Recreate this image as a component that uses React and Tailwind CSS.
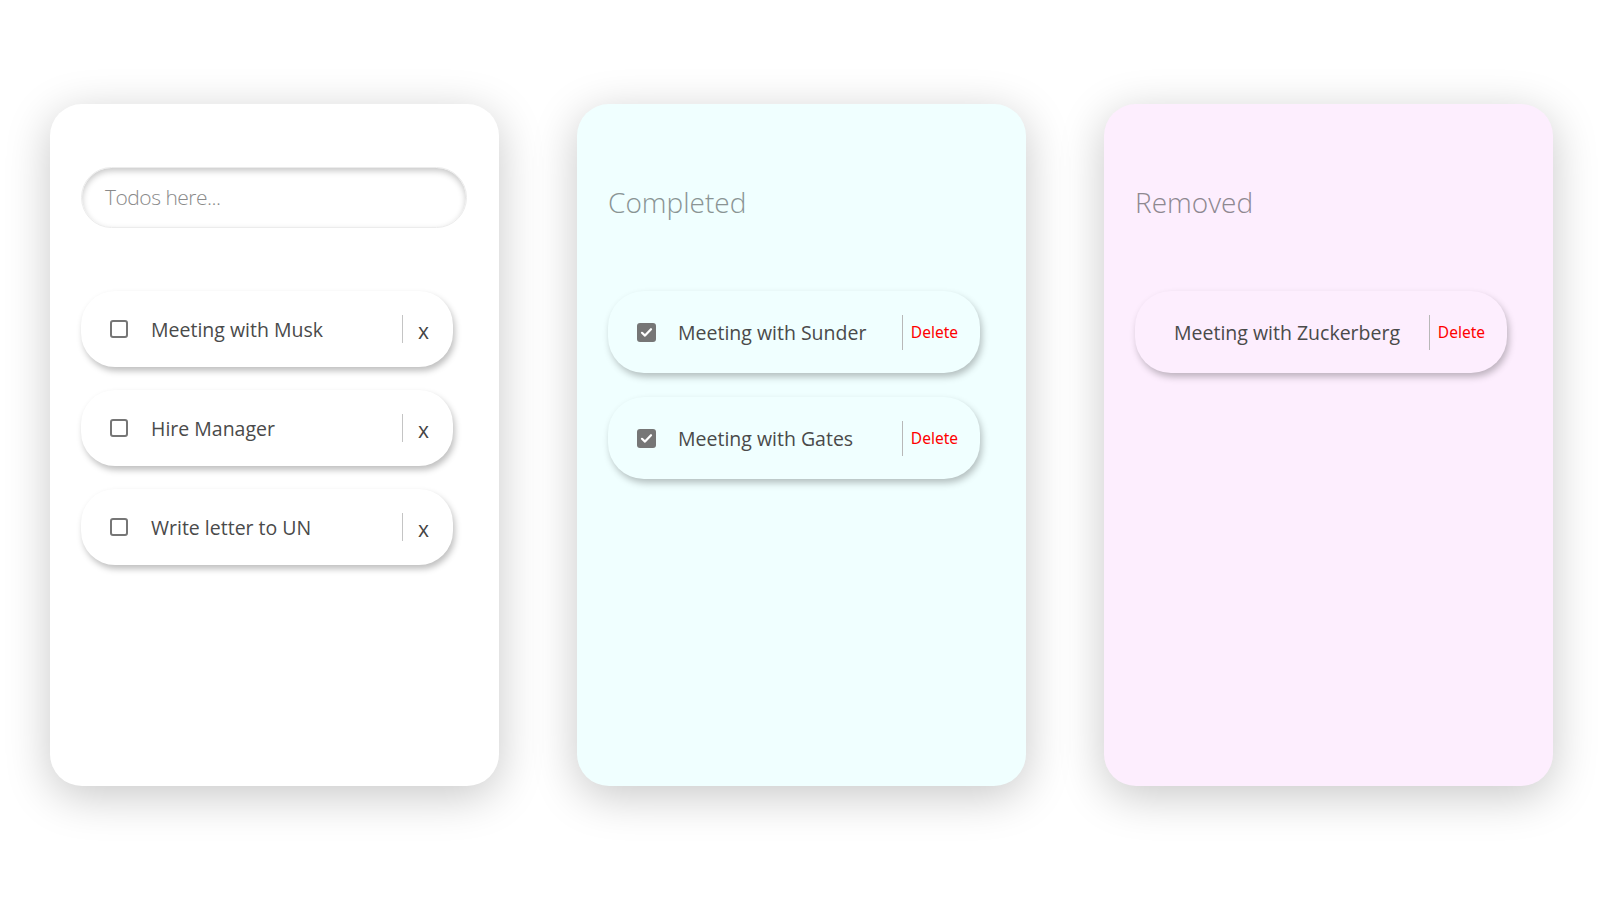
import React from "react";

const font = { fontFamily: '"Open Sans", "Noto Sans", sans-serif' };

function Unchecked() {
  return <span className="block w-[18px] h-[18px] rounded-[3px] border-2 border-[#767676] bg-white shrink-0" />;
}

function Checked() {
  return (
    <span className="flex items-center justify-center w-[19px] h-[19px] rounded-[3px] bg-[#767676] shrink-0">
      <svg width="13" height="13" viewBox="0 0 13 13" fill="none">
        <path d="M2 6.8 L5 9.6 L11 3.2" stroke="white" strokeWidth="2.2" strokeLinecap="round" strokeLinejoin="round" />
      </svg>
    </span>
  );
}

function TodoItem({ text }) {
  return (
    <div className="flex items-center w-[372px] h-[76px] rounded-[34px] bg-white shadow-[2px_4px_6px_rgba(0,0,0,0.25)] pl-[29px] pr-[24px]">
      <Unchecked />
      <span className="flex-1 ml-[23px] text-[19.5px] text-[#4a4a4a] leading-none pt-[2px]">{text}</span>
      <span className="w-px h-[28px] bg-[#c4c4c4] mr-[15px]" />
      <span className="text-[21px] text-[#444] leading-none pt-[4px]">x</span>
    </div>
  );
}

function DoneItem({ text, bg, checked }) {
  return (
    <div className={`flex items-center w-[372px] h-[82px] rounded-[36px] ${bg} shadow-[2px_4px_7px_rgba(0,0,0,0.25)] ${checked ? "pl-[29px]" : "pl-[39px]"} pr-[22px]`}>
      {checked && <Checked />}
      <span className={`flex-1 ${checked ? "ml-[22px]" : ""} text-[19.5px] text-[#4a4a4a] leading-none pt-[2px]`}>{text}</span>
      <span className="w-px h-[35px] bg-[#b8b8b8] mr-[8px]" />
      <span className="text-[15.5px] text-[#ff0000] leading-none pt-[2px]" style={{ fontFamily: '"Noto Sans", "Open Sans", sans-serif' }}>Delete</span>
    </div>
  );
}

export default function App() {
  return (
    <div className="min-h-screen w-full bg-white flex justify-center gap-[78px] pt-[104px]" style={font}>
      <div className="w-[449px] h-[682px] rounded-[32px] bg-white shadow-[0_10px_45px_rgba(0,0,0,0.22)] pl-[31px] pt-[63px]">
        <div className="w-[386px] h-[61px] rounded-full bg-white shadow-[inset_0_3px_6px_rgba(0,0,0,0.22)] border border-[#ececec] flex items-center pl-[23px]">
          <span className="text-[21px] font-light text-[#8a8a8a] tracking-[-0.5px]">Todos here...</span>
        </div>
        <div className="flex flex-col gap-[23px] mt-[63px]">
          <TodoItem text="Meeting with Musk" />
          <TodoItem text="Hire Manager" />
          <TodoItem text="Write letter to UN" />
        </div>
      </div>

      <div className="w-[449px] h-[682px] rounded-[32px] bg-[#f0ffff] shadow-[0_10px_45px_rgba(0,0,0,0.22)] px-[31px] pt-[81px]">
        <h2 className="text-[28px] font-light text-[#8a9494] leading-[34px]">Completed</h2>
        <div className="flex flex-col gap-[24px] mt-[72px]">
          <DoneItem text="Meeting with Sunder" bg="bg-[#f0ffff]" checked />
          <DoneItem text="Meeting with Gates" bg="bg-[#f0ffff]" checked />
        </div>
      </div>

      <div className="w-[449px] h-[682px] rounded-[32px] bg-[#fdeefe] shadow-[0_10px_45px_rgba(0,0,0,0.22)] px-[31px] pt-[81px]">
        <h2 className="text-[28px] font-light text-[#8e8890] leading-[34px]">Removed</h2>
        <div className="flex flex-col gap-[24px] mt-[72px]">
          <DoneItem text="Meeting with Zuckerberg" bg="bg-[#fdeefe]" />
        </div>
      </div>
    </div>
  );
}
